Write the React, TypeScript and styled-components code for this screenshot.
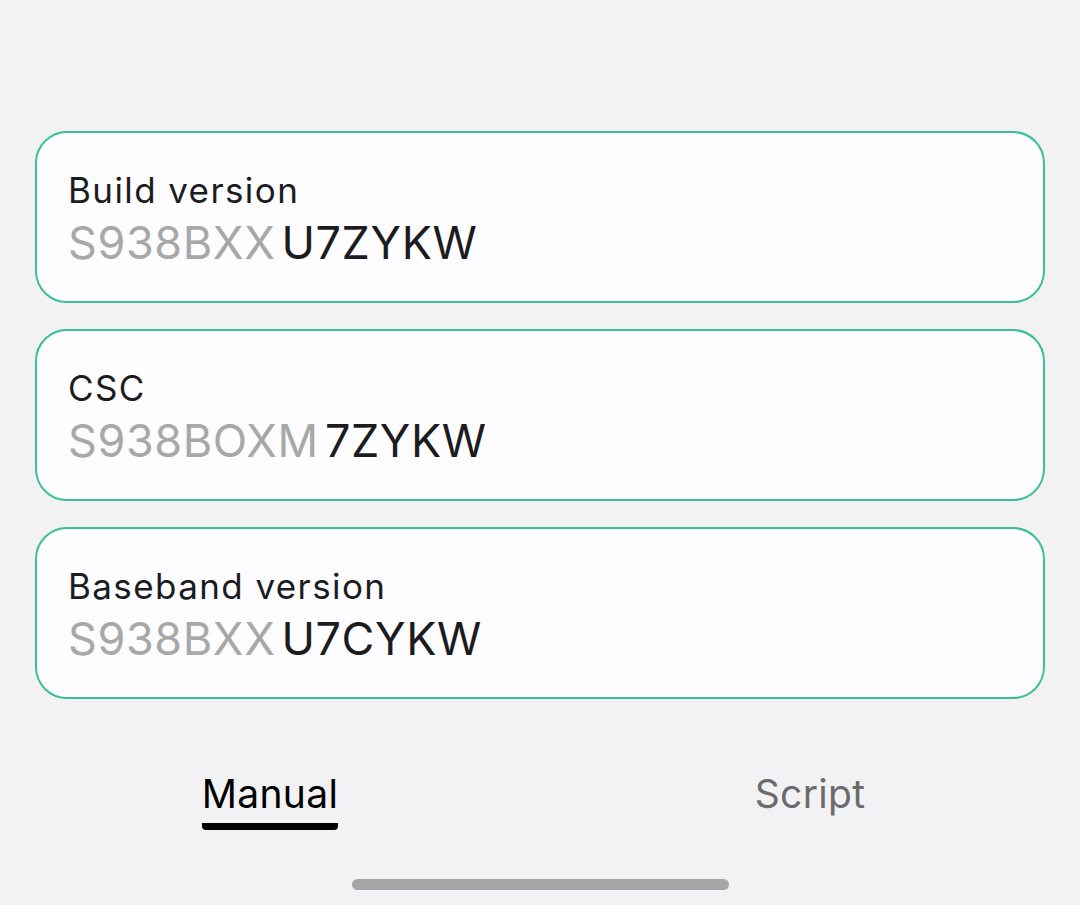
import React from "react";
import styled, { createGlobalStyle } from "styled-components";

const GlobalStyle = createGlobalStyle`
  html, body {
    margin: 0;
    padding: 0;
    background: #f2f2f4;
    font-family: Inter, "Noto Sans", sans-serif;
  }
`;

const Screen = styled.div`
  width: 1080px;
  height: 905px;
  display: flex;
  flex-direction: column;
  box-sizing: border-box;
  padding-top: 131px;
  overflow: hidden;
`;

const CardList = styled.div`
  display: flex;
  flex-direction: column;
  gap: 26px;
  padding: 0 35px;
`;

const Card = styled.div`
  height: 172px;
  box-sizing: border-box;
  border: 2.5px solid #3dbf94;
  border-radius: 32px;
  background: #fdfdff;
  padding: 37px 31px 0;
  display: flex;
  flex-direction: column;
`;

const Label = styled.div`
  font-size: 35px;
  line-height: 41px;
  letter-spacing: 1.4px;
  color: #1c1c1e;
`;

const Value = styled.div`
  margin-top: 5px;
  font-size: 45px;
  line-height: 54px;
  letter-spacing: 0.6px;
  display: flex;
  gap: 6px;
`;

const Prefix = styled.span`
  color: #a8a8a8;
`;

const Suffix = styled.span`
  color: #1c1c1e;
`;

const Tabs = styled.div`
  display: flex;
  margin-top: 70px;
`;

const Tab = styled.div`
  flex: 1;
  display: flex;
  justify-content: center;
`;

const TabLabel = styled.div<{ $active?: boolean }>`
  font-size: 39px;
  line-height: 50px;
  letter-spacing: 0.3px;
  color: ${(p) => (p.$active ? "#000" : "#6b6b6b")};
  padding-bottom: 4px;
  border-bottom: 7px solid ${(p) => (p.$active ? "#000" : "transparent")};
  border-radius: 0 0 4px 4px;
`;

const HomeBar = styled.div`
  width: 377px;
  height: 11px;
  border-radius: 6px;
  background: #a6a6a6;
  margin: 49px auto 0;
`;

const rows = [
  { label: "Build version", prefix: "S938BXX", suffix: "U7ZYKW" },
  { label: "CSC", prefix: "S938BOXM", suffix: "7ZYKW" },
  { label: "Baseband version", prefix: "S938BXX", suffix: "U7CYKW" },
];

export default function App() {
  return (
    <Screen>
      <GlobalStyle />
      <CardList>
        {rows.map((r) => (
          <Card key={r.label}>
            <Label>{r.label}</Label>
            <Value>
              <Prefix>{r.prefix}</Prefix>
              <Suffix>{r.suffix}</Suffix>
            </Value>
          </Card>
        ))}
      </CardList>
      <Tabs>
        <Tab>
          <TabLabel $active>Manual</TabLabel>
        </Tab>
        <Tab>
          <TabLabel>Script</TabLabel>
        </Tab>
      </Tabs>
      <HomeBar />
    </Screen>
  );
}
